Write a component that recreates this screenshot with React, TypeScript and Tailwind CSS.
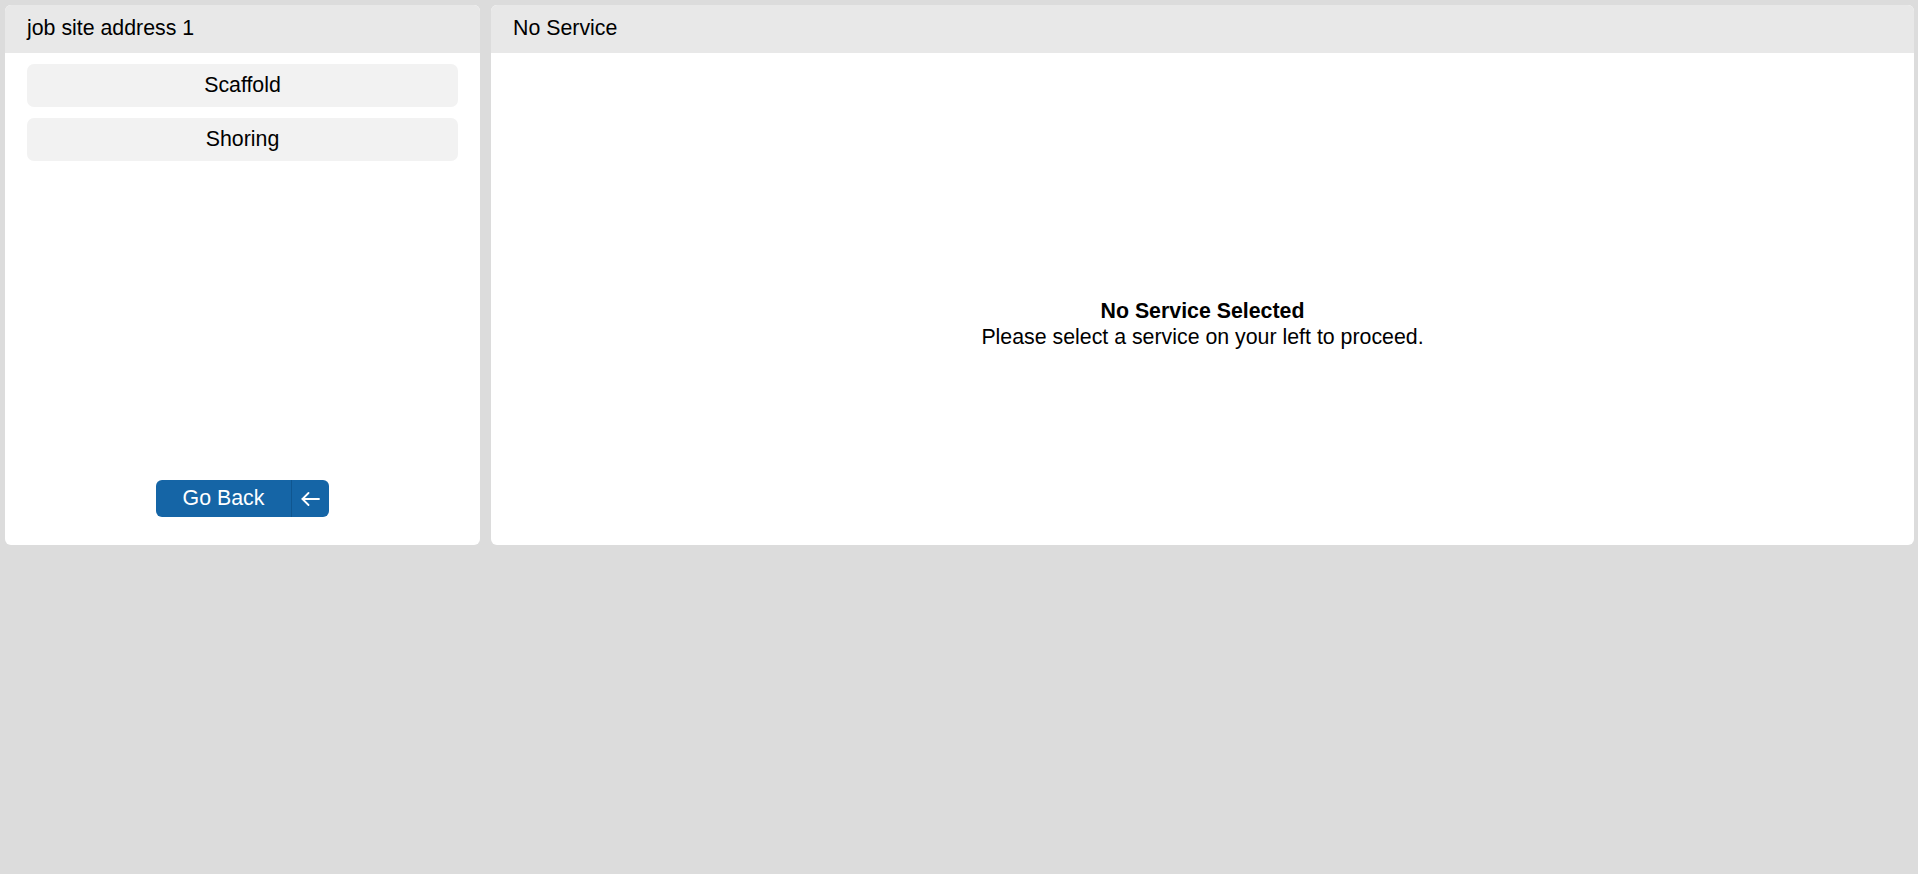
import React from 'react';

const services = ['Scaffold', 'Shoring'];

function BackArrow() {
  return (
    <svg width="19" height="14" viewBox="0 0 19 14" fill="none" stroke="white" strokeWidth="1.8" strokeLinecap="round" strokeLinejoin="round">
      <path d="M18 7H1.5" />
      <path d="M7.5 1L1.5 7l6 6" />
    </svg>
  );
}

export default function App() {
  return (
    <div className="min-h-screen w-full bg-[#dcdcdc] pt-[5px] pl-[5px] pr-[4px] font-['Liberation_Sans',Arial,sans-serif] text-[21.33px] text-black">
      <div className="flex gap-[11px] h-[540px]">
        {/* left: job site + services */}
        <div className="w-[475px] flex flex-col bg-white rounded-[6px] overflow-hidden">
          <div className="h-[48px] shrink-0 flex items-center px-[22px] bg-[#e8e8e8]">
            job site address 1
          </div>
          <div className="flex flex-col gap-[11px] px-[22px] pt-[11px]">
            {services.map((s) => (
              <button
                key={s}
                className="h-[43px] rounded-[7px] bg-[#f2f2f2] flex items-center justify-center"
              >
                {s}
              </button>
            ))}
          </div>
          <div className="mt-auto pb-[28px] flex justify-center">
            <button className="h-[37px] w-[173px] flex rounded-[6px] bg-[#1565a6] text-white overflow-hidden">
              <span className="w-[135px] h-full flex items-center justify-center">Go Back</span>
              <span className="flex-1 h-full flex items-center justify-center border-l border-[#0f5690]">
                <BackArrow />
              </span>
            </button>
          </div>
        </div>

        {/* right: selected service */}
        <div className="flex-1 flex flex-col bg-white rounded-[6px] overflow-hidden">
          <div className="h-[48px] shrink-0 flex items-center px-[22px] bg-[#e8e8e8]">
            No Service
          </div>
          <div className="flex-1 flex flex-col items-center justify-center pt-[50px] text-center leading-[26px]">
            <div className="font-bold">No Service Selected</div>
            <div>Please select a service on your left to proceed.</div>
          </div>
        </div>
      </div>
    </div>
  );
}
